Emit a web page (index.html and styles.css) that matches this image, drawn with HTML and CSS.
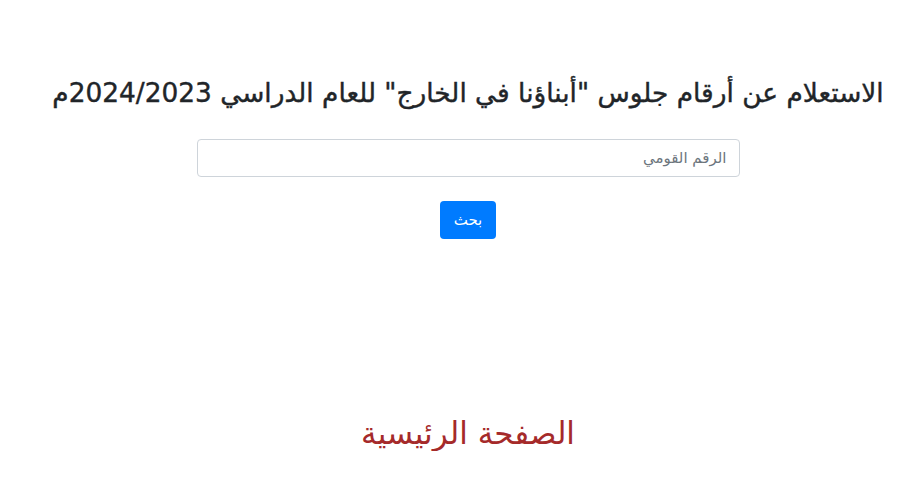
FILE: index.html
```html
<!DOCTYPE html>
<html lang="ar" dir="rtl">
<head>
<meta charset="utf-8">
<link rel="stylesheet" href="styles.css">
</head>
<body>
<div class="page">
  <h1 class="title">الاستعلام عن أرقام جلوس "أبناؤنا في الخارج" للعام الدراسي 2024/2023م</h1>
  <form class="form">
    <input class="field" type="text" placeholder="الرقم القومي">
    <button class="btn" type="button">بحث</button>
  </form>
  <a class="home" href="#">الصفحة الرئيسية</a>
</div>
</body>
</html>
```
FILE: styles.css
```css
html, body { margin: 0; padding: 0; background: #fff; }
body { font-family: "DejaVu Sans", sans-serif; color: #212529; }
.page { display: flex; flex-direction: column; align-items: center; padding: 75px 0 0 16px; }
.title { margin: 0; font-size: 26.4px; font-weight: 500; line-height: 35px; white-space: nowrap; -webkit-text-stroke: 0.4px #212529; }
.form { display: flex; flex-direction: column; align-items: center; margin-top: 29px; }
.field { box-sizing: border-box; width: 543px; height: 38px; border: 1px solid #ced4da; border-radius: 4px; padding: 6px 12px; font-family: "DejaVu Sans", sans-serif; font-size: 15px; color: #495057; direction: rtl; }
.field::placeholder { color: #6c757d; }
.btn { margin-top: 24px; width: 56px; height: 38px; border: 0; border-radius: 4px; background: #007bff; color: #fff; font-family: "DejaVu Sans", sans-serif; font-size: 15px; }
.home { margin-top: 176px; font-size: 31px; color: #a52a2a; text-decoration: none; }
```
